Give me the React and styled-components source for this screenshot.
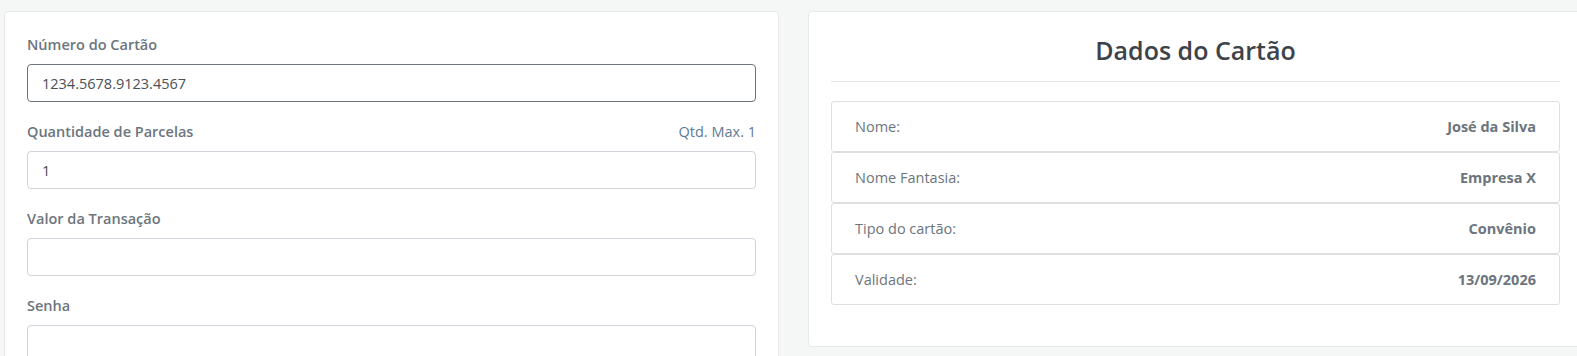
import React from "react";
import styled, { createGlobalStyle } from "styled-components";

const Global = createGlobalStyle`
  html, body {
    margin: 0;
    padding: 0;
    background: #f5f6f6;
    overflow: hidden;
    font-family: "Open Sans", "Noto Sans", sans-serif;
  }
`;

const Page = styled.div`
  display: grid;
  grid-template-columns: 775px 775px;
  column-gap: 29px;
  align-items: start;
  padding: 11px 0 0 4px;
  width: max-content;
`;

const Card = styled.div`
  background: #ffffff;
  border: 1px solid #e7e8ea;
  border-radius: 4px;
  padding: ${(p) => p.$pad};
`;

const Group = styled.div`
  margin-bottom: 18px;
`;

const LabelRow = styled.div`
  display: flex;
  justify-content: space-between;
  align-items: center;
  height: 22px;
  margin-bottom: 9px;
`;

const Label = styled.label`
  font-size: 14.5px;
  font-weight: 600;
  color: #6c757d;
`;

const Hint = styled.span`
  font-size: 14.5px;
  color: #5f7a93;
`;

const Input = styled.div`
  box-sizing: border-box;
  height: 38px;
  border: 1px solid ${(p) => (p.$focused ? "#6f757c" : "#ced4da")};
  border-radius: 4px;
  display: flex;
  align-items: center;
  padding: 0 14px;
  font-size: 14.5px;
  color: #495057;
`;

const Title = styled.h2`
  margin: 0;
  text-align: center;
  font-size: 25px;
  line-height: 36px;
  font-weight: 600;
  color: #3d4349;
`;

const Divider = styled.hr`
  margin: 13px 0 19px;
  border: 0;
  border-top: 1px solid #e3e4e6;
`;

const List = styled.div`
  display: flex;
  flex-direction: column;
`;

const Item = styled.div`
  box-sizing: border-box;
  height: 51px;
  border: 1px solid #dedfe1;
  border-radius: 3px;
  display: flex;
  justify-content: space-between;
  align-items: center;
  padding: 0 23px;
  font-size: 14.5px;
  color: #6c757d;
`;

const ItemValue = styled.span`
  font-weight: 700;
  color: #6c757d;
`;

const fields = [
  { label: "Número do Cartão", value: "1234.5678.9123.4567", focused: true },
  { label: "Quantidade de Parcelas", value: "1", hint: "Qtd. Max. 1" },
  { label: "Valor da Transação", value: "" },
  { label: "Senha", value: "" },
];

const info = [
  ["Nome:", "José da Silva"],
  ["Nome Fantasia:", "Empresa X"],
  ["Tipo do cartão:", "Convênio"],
  ["Validade:", "13/09/2026"],
];

export default function App() {
  return (
    <>
      <Global />
      <Page>
        <Card $pad="21px 22px 40px">
          {fields.map((f) => (
            <Group key={f.label}>
              <LabelRow>
                <Label>{f.label}</Label>
                {f.hint && <Hint>{f.hint}</Hint>}
              </LabelRow>
              <Input $focused={f.focused}>{f.value}</Input>
            </Group>
          ))}
        </Card>
        <Card $pad="20px 22px 41px">
          <Title>Dados do Cartão</Title>
          <Divider />
          <List>
            {info.map(([k, v]) => (
              <Item key={k}>
                <span>{k}</span>
                <ItemValue>{v}</ItemValue>
              </Item>
            ))}
          </List>
        </Card>
      </Page>
    </>
  );
}
